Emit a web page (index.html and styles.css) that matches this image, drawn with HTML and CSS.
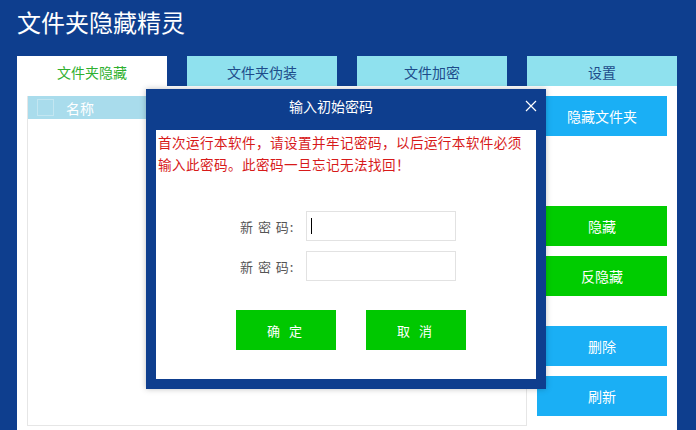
FILE: index.html
```html
<!DOCTYPE html>
<html lang="zh-CN">
<head>
    <meta charset="UTF-8">
    <meta name="viewport" content="width=device-width, initial-scale=1.0">
    <title>文件夹隐藏精灵</title>
    <link rel="stylesheet" href="styles.css">
</head>
<body>
<div class="app">
    <h1 class="app-title">文件夹隐藏精灵</h1>
    <div class="tabs">
        <div class="tab active">文件夹隐藏</div>
        <div class="tab">文件夹伪装</div>
        <div class="tab">文件加密</div>
        <div class="tab">设置</div>
    </div>
    <div class="panel">
        <div class="file-list">
            <div class="list-head">
                <span class="check"></span>
                <span class="col-name">名称</span>
            </div>
        </div>
        <div class="side">
            <button type="button" class="btn blue">隐藏文件夹</button>
            <button type="button" class="btn green gap-big">隐藏</button>
            <button type="button" class="btn green">反隐藏</button>
            <button type="button" class="btn blue gap-mid">删除</button>
            <button type="button" class="btn blue">刷新</button>
        </div>
    </div>
</div>

<!-- 初始密码弹窗 -->
<div class="dialog">
    <div class="dialog-head">
        <span>输入初始密码</span>
        <svg class="close" width="12" height="12" viewBox="0 0 12 12">
            <path d="M1 1 L11 11 M11 1 L1 11" stroke="#fff" stroke-width="1.2" fill="none"/>
        </svg>
    </div>
    <div class="dialog-body">
        <p class="notice">首次运行本软件，请设置并牢记密码，以后运行本软件必须输入此密码。此密码一旦忘记无法找回！</p>
        <div class="form">
            <div class="row">
                <label for="pwd1">新 密 码:</label>
                <div class="field focus" id="pwd1"><span class="caret"></span></div>
            </div>
            <div class="row">
                <label for="pwd2">新 密 码:</label>
                <div class="field" id="pwd2"></div>
            </div>
        </div>
        <div class="actions">
            <button type="button" class="dlg-btn">确 定</button>
            <button type="button" class="dlg-btn">取 消</button>
        </div>
    </div>
</div>
</body>
</html>
```
FILE: styles.css
```css
/* 主界面 */
body {
    margin: 0;
    padding: 0;
    background-color: #0e3e8e;
    font-family: "Noto Sans CJK SC", "Liberation Sans", sans-serif;
    width: 696px;
    height: 430px;
    overflow: hidden;
    position: relative;
}
.app {
    padding-left: 17px;
}
.app-title {
    margin: 0;
    height: 56px;
    padding-top: 6px;
    box-sizing: border-box;
    color: #fff;
    font-size: 24px;
    font-weight: normal;
    line-height: 32px;
}
.tabs {
    display: flex;
    gap: 20px;
}
.tab {
    width: 150px;
    height: 30px;
    line-height: 32px;
    text-align: center;
    background-color: #8fe1ee;
    color: #1d4c8a;
    font-size: 14px;
}
.tab.active {
    background-color: #fff;
    color: #2fb02f;
}
.panel {
    width: 660px;
    height: 350px;
    background-color: #fff;
    box-sizing: border-box;
    padding: 10px;
    display: flex;
    gap: 10px;
}
.file-list {
    width: 500px;
    height: 330px;
    box-sizing: border-box;
    border: 1px solid #e6e6e6;
    border-top: none;
}
.list-head {
    height: 23px;
    background-color: #a9dcec;
    display: flex;
    align-items: center;
    padding-left: 9px;
}
.check {
    width: 15px;
    height: 15px;
    border: 1px solid #c3e6f1;
    margin-right: 12px;
}
.col-name {
    color: #fff;
    font-size: 14px;
}
.side {
    width: 130px;
    display: flex;
    flex-direction: column;
}
.btn {
    height: 40px;
    border: none;
    color: #fff;
    font-family: inherit;
    font-size: 14px;
    margin-bottom: 10px;
    padding: 0;
}
.btn.blue {
    background-color: #1aaff5;
}
.btn.green {
    background-color: #00cc00;
}
.btn.gap-big {
    margin-top: 60px;
}
.btn.gap-mid {
    margin-top: 20px;
}

/* 弹窗 */
.dialog {
    position: absolute;
    left: 146px;
    top: 89px;
    width: 400px;
    height: 300px;
    background-color: #0e3e8e;
    box-sizing: border-box;
    padding: 0 10px 10px;
    box-shadow: 0 0 6px rgba(0, 0, 0, 0.25);
}
.dialog-head {
    height: 41px;
    color: #fff;
    font-size: 14px;
    line-height: 34px;
    text-align: center;
    padding-right: 30px;
    position: relative;
}
.close {
    position: absolute;
    right: -1px;
    top: 11px;
}
.dialog-body {
    background-color: #fff;
    height: 249px;
    padding: 1px 2px 0;
    box-sizing: border-box;
}
.notice {
    margin: 0;
    color: #d71a1a;
    font-size: 13.6px;
    line-height: 22px;
    letter-spacing: 0.4px;
}
.form {
    margin-top: 36px;
    padding-left: 82px;
}
.row {
    display: flex;
    align-items: center;
    margin-bottom: 10px;
}
.row label {
    width: 66px;
    color: #555;
    font-size: 13px;
    letter-spacing: 1px;
}
.field {
    width: 150px;
    height: 30px;
    box-sizing: border-box;
    border: 1px solid #e2e2e2;
    position: relative;
}
.caret {
    position: absolute;
    left: 4px;
    top: 6px;
    width: 1px;
    height: 16px;
    background-color: #000;
}
.actions {
    display: flex;
    justify-content: center;
    gap: 30px;
    margin-top: 29px;
    padding-left: 10px;
}
.dlg-btn {
    width: 100px;
    height: 40px;
    border: none;
    background-color: #00c800;
    color: #fff;
    font-family: inherit;
    font-size: 13px;
    letter-spacing: 3px;
}
```
